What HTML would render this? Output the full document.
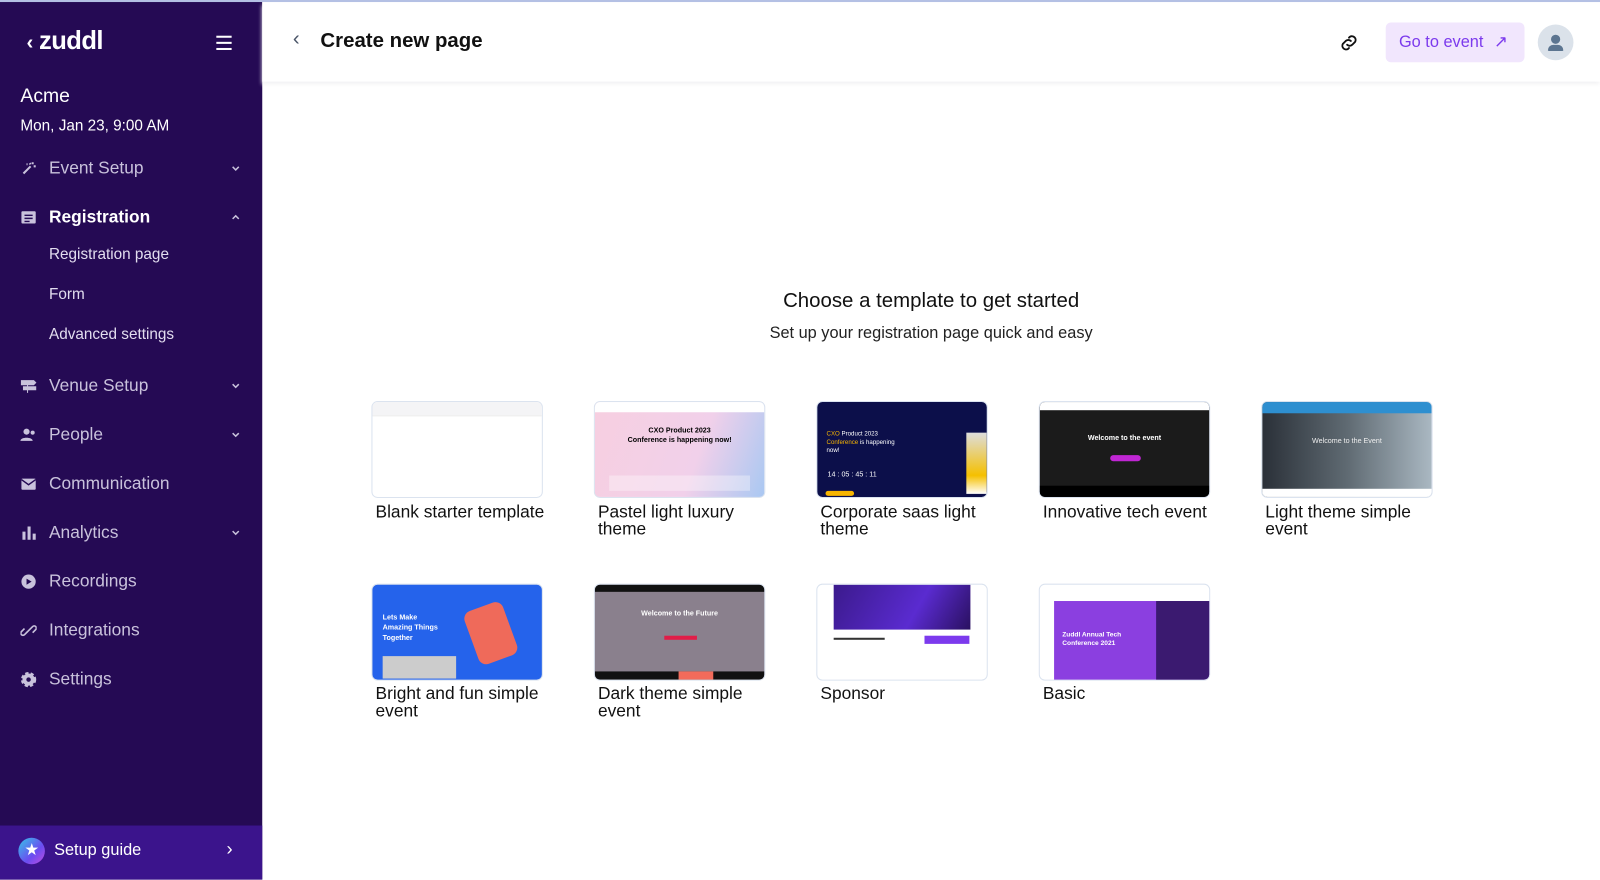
<!DOCTYPE html>
<html><head><meta charset="utf-8"><style>
*{box-sizing:border-box;margin:0;padding:0}
body{width:1600px;height:879px;overflow:hidden;font-family:"Liberation Sans",sans-serif;background:#fff;position:relative}
#w{position:absolute;left:0;top:0;width:1568px;height:862px;transform:scale(1.02041);transform-origin:0 0}
.topline{position:absolute;left:0;top:0;width:1568px;height:2px;background:#b4c0e4;z-index:5}
.side{position:absolute;left:0;top:0;width:257px;height:862px;background:#250a54;color:#fff}
.logo{position:absolute;left:26px;top:26px;font-size:25px;font-weight:bold;letter-spacing:-0.5px}
.ham{position:absolute;left:212px;top:35px;width:15px}
.ham i{display:block;height:2px;background:#fff;margin-bottom:4px}
.acme{position:absolute;left:20px;top:84px;font-size:19px}
.date{position:absolute;left:20px;top:115px;font-size:15px}
.item{position:absolute;left:20px;font-size:17px;color:#c9c2dc;display:flex;align-items:center;width:220px}
.item .ic{width:16px;height:16px;margin-right:12px;display:inline-block}
.item .chev{position:absolute;right:4px;top:5px;width:10px;height:10px}
.sub{position:absolute;left:48px;font-size:15px;color:#e2ddef}
.guide{position:absolute;left:0;top:809px;width:257px;height:53px;background:#3b148c}
.main-h{position:absolute;left:257px;top:2px;right:0;height:78px;background:#fff;box-shadow:0 3px 4px #f2f2f4}
.card{position:absolute;width:168px;height:95px;border:1.5px solid #dbe3ef;border-radius:6px;overflow:hidden}
.lbl{position:absolute;font-size:17px;color:#111;line-height:17px;width:168px}
</style></head><body><div id="w">
<div class="topline"></div>
<div class="side">
 <div class="logo"><span style="font-size:20px;margin-right:6px">&lsaquo;</span>zuddl</div>
 <div class="ham"><i></i><i></i><i></i></div>
 <div class="acme">Acme</div>
 <div class="date">Mon, Jan 23, 9:00 AM</div>
 <div class="item" style="top:155px"><svg class="ic" viewBox="0 0 16 16"><path d="M3 13L10 6M9 3l1 1M12 2v2M13 6h2M6 4l1 0" stroke="#c9c2dc" stroke-width="2" fill="none"/></svg>Event Setup<svg class="chev" viewBox="0 0 10 10"><path d="M2 3.5l3 3 3-3" stroke="#c9c2dc" stroke-width="1.5" fill="none"/></svg></div>
 <div class="item" style="top:203px;color:#fff;font-weight:bold"><svg class="ic" viewBox="0 0 16 16"><rect x="1" y="2" width="14" height="12" rx="1" fill="#c9c2dc"/><path d="M4 6h8M4 9h8M4 12h5" stroke="#250a54" stroke-width="1.4"/></svg>Registration<svg class="chev" viewBox="0 0 10 10"><path d="M2 6.5l3-3 3 3" stroke="#c9c2dc" stroke-width="1.5" fill="none"/></svg></div>
 <div class="sub" style="top:241px">Registration page</div>
 <div class="sub" style="top:280px">Form</div>
 <div class="sub" style="top:319px">Advanced settings</div>
 <div class="item" style="top:368px"><svg class="ic" viewBox="0 0 16 16"><path d="M1 3h12l2 2-2 2H1zM3 9h12v3H3zM7 7v8" fill="#c9c2dc" stroke="#c9c2dc"/></svg>Venue Setup<svg class="chev" viewBox="0 0 10 10"><path d="M2 3.5l3 3 3-3" stroke="#c9c2dc" stroke-width="1.5" fill="none"/></svg></div>
 <div class="item" style="top:416px"><svg class="ic" viewBox="0 0 16 16"><circle cx="6" cy="5" r="3" fill="#c9c2dc"/><path d="M0 14c0-4 12-4 12 0z" fill="#c9c2dc"/><circle cx="12" cy="6" r="2" fill="#c9c2dc"/></svg>People<svg class="chev" viewBox="0 0 10 10"><path d="M2 3.5l3 3 3-3" stroke="#c9c2dc" stroke-width="1.5" fill="none"/></svg></div>
 <div class="item" style="top:464px"><svg class="ic" viewBox="0 0 16 16"><rect x="1" y="3" width="14" height="11" rx="1" fill="#c9c2dc"/><path d="M1 4l7 5 7-5" stroke="#250a54" stroke-width="1.4" fill="none"/></svg>Communication</div>
 <div class="item" style="top:512px"><svg class="ic" viewBox="0 0 16 16"><path d="M2 7h3v8H2zM7 2h3v13H7zM12 9h3v6h-3z" fill="#c9c2dc"/></svg>Analytics<svg class="chev" viewBox="0 0 10 10"><path d="M2 3.5l3 3 3-3" stroke="#c9c2dc" stroke-width="1.5" fill="none"/></svg></div>
 <div class="item" style="top:560px"><svg class="ic" viewBox="0 0 16 16"><circle cx="8" cy="8" r="7" fill="#c9c2dc"/><path d="M6 5l5 3-5 3z" fill="#250a54"/></svg>Recordings</div>
 <div class="item" style="top:608px"><svg class="ic" viewBox="0 0 16 16"><path d="M7 9l-3 3a2 2 0 0 1-3-3l3-3M9 7l3-3a2 2 0 0 1 3 3l-3 3M6 10l4-4" stroke="#c9c2dc" stroke-width="1.6" fill="none"/></svg>Integrations</div>
 <div class="item" style="top:656px"><svg class="ic" viewBox="0 0 16 16"><circle cx="8" cy="8" r="6" fill="#c9c2dc" stroke="#c9c2dc" stroke-width="3" stroke-dasharray="3 2"/><circle cx="8" cy="8" r="2.2" fill="#250a54"/></svg>Settings</div>
 <div class="guide">
  <div style="position:absolute;left:18px;top:12px;width:26px;height:26px;border-radius:50%;background:linear-gradient(135deg,#36c6e8,#6b4cf0 60%,#c04fe0);color:#fff;text-align:center;font-size:16px;line-height:26px">&#9733;</div>
  <div style="position:absolute;left:53px;top:16px;font-size:16px;color:#fff">Setup guide</div>
  <div style="position:absolute;left:222px;top:13px;font-size:18px;color:#fff">&rsaquo;</div>
 </div>
</div>
<div class="main-h">
 <div style="position:absolute;left:30px;top:25px;font-size:20px;color:#4a5568">&lsaquo;</div>
 <div style="position:absolute;left:57px;top:27px;font-size:20px;color:#111;font-weight:bold">Create new page</div>
 <svg style="position:absolute;left:1054px;top:29px" width="22" height="22" viewBox="0 0 24 24"><path d="M10 14a4 4 0 0 0 5.5 0l3-3a4 4 0 0 0-5.5-5.5l-1 1M14 10a4 4 0 0 0-5.5 0l-3 3a4 4 0 0 0 5.5 5.5l1-1" stroke="#111" stroke-width="2" fill="none" stroke-linecap="round"/></svg>
 <div style="position:absolute;left:1101px;top:20px;width:136px;height:39px;background:#f1e6fd;border-radius:5px;color:#7c3aed;font-size:16px;line-height:39px;padding-left:13px">Go to event <span style="margin-left:6px">&#8599;</span></div>
 <div style="position:absolute;left:1250px;top:22px;width:35px;height:35px;border-radius:50%;background:#dbe2ea">
  <div style="position:absolute;left:13px;top:10px;width:9px;height:9px;border-radius:50%;background:#5c7590"></div>
  <div style="position:absolute;left:10px;top:20px;width:15px;height:6px;border-radius:6px 6px 1px 1px;background:#5c7590"></div>
 </div>
</div>
<div style="position:absolute;left:257px;top:284px;width:1311px;text-align:center;font-size:20px;color:#111">Choose a template to get started</div>
<div style="position:absolute;left:257px;top:318px;width:1311px;text-align:center;font-size:16px;color:#222">Set up your registration page quick and easy</div>

<div class="card" style="left:364px;top:393px;background:#fff"><div style="height:14px;background:#f4f4f6;border-bottom:1px solid #eee"></div></div>
<div class="lbl" style="left:368px;top:493px;width:180px">Blank starter template</div>
<div class="card" style="left:582px;top:393px;background:linear-gradient(110deg,#f7cfe0,#f1d0ea 60%,#a9c8f2)"><div style="height:10px;background:#fff"></div><div style="text-align:center;font-size:7px;font-weight:bold;margin-top:14px;line-height:9px">CXO Product 2023<br>Conference is happening now!</div><div style="position:absolute;left:14px;top:72px;width:138px;height:15px;background:rgba(255,255,255,.35)"></div></div>
<div class="lbl" style="left:586px;top:493px;width:150px">Pastel light luxury theme</div>
<div class="card" style="left:800px;top:393px;background:#0c0f4a"><div style="position:absolute;left:9px;top:28px;font-size:6px;color:#fff;line-height:8px"><span style="color:#f7b500">CXO</span> Product 2023<br><span style="color:#f7b500">Conference</span> is happening<br>now!</div><div style="position:absolute;left:10px;top:68px;font-size:7px;color:#fff">14 : 05 : 45 : 11</div><div style="position:absolute;left:8px;top:87px;width:28px;height:5px;background:#f7b500;border-radius:3px"></div><div style="position:absolute;right:0;top:30px;width:20px;height:60px;background:linear-gradient(#ddd,#f5c000 70%,#fff)"></div></div>
<div class="lbl" style="left:804px;top:493px">Corporate saas light theme</div>
<div class="card" style="left:1018px;top:393px;background:#1b1b1b"><div style="height:8px;background:#fff"></div><div style="text-align:center;color:#fff;font-size:7px;font-weight:bold;margin-top:24px">Welcome to the event</div><div style="position:absolute;left:69px;top:52px;width:30px;height:6px;border-radius:3px;background:#c026d3"></div><div style="position:absolute;left:0;bottom:0;width:100%;height:11px;background:#000"></div></div>
<div class="lbl" style="left:1022px;top:493px;width:180px">Innovative tech event</div>
<div class="card" style="left:1236px;top:393px;background:linear-gradient(90deg,#2a3038,#5f6a72 50%,#aab8c2)"><div style="height:11px;background:#2e8fd0"></div><div style="text-align:center;color:#eee;font-size:7px;margin-top:24px">Welcome to the Event</div><div style="position:absolute;left:0;bottom:0;width:100%;height:8px;background:#fff"></div></div>
<div class="lbl" style="left:1240px;top:493px">Light theme simple event</div>

<div class="card" style="left:364px;top:572px;background:#2563eb"><div style="position:absolute;left:10px;top:28px;color:#fff;font-size:7px;font-weight:bold;line-height:10px">Lets Make<br>Amazing Things<br>Together</div><div style="position:absolute;left:96px;top:20px;width:40px;height:55px;background:#ef6a5a;border-radius:8px;transform:rotate(-20deg)"></div><div style="position:absolute;left:10px;top:70px;width:72px;height:22px;background:#ccc"></div></div>
<div class="lbl" style="left:368px;top:671px">Bright and fun simple event</div>
<div class="card" style="left:582px;top:572px;background:#8a808d"><div style="height:7px;background:#111"></div><div style="text-align:center;color:#fff;font-size:7px;font-weight:bold;margin-top:18px">Welcome to the Future</div><div style="position:absolute;left:68px;top:50px;width:32px;height:4px;background:#e11d48"></div><div style="position:absolute;left:0;bottom:0;width:100%;height:8px;background:#111"></div><div style="position:absolute;left:82px;bottom:0;width:34px;height:8px;background:#f26b5b"></div></div>
<div class="lbl" style="left:586px;top:671px">Dark theme simple event</div>
<div class="card" style="left:800px;top:572px;background:#fff"><div style="position:absolute;left:16px;top:0;width:134px;height:44px;background:linear-gradient(120deg,#3b1a8c,#5a2bd0 60%,#2a1060)"></div><div style="position:absolute;left:105px;top:50px;width:44px;height:8px;background:#7c3aed"></div><div style="position:absolute;left:16px;top:52px;width:50px;height:2px;background:#333"></div></div>
<div class="lbl" style="left:804px;top:671px">Sponsor</div>
<div class="card" style="left:1018px;top:572px;background:#fff"><div style="position:absolute;left:14px;top:16px;width:154px;height:79px;background:#8b3fe0"></div><div style="position:absolute;left:114px;top:16px;width:54px;height:79px;background:#3b1a70"></div><div style="position:absolute;left:22px;top:46px;color:#fff;font-size:6.5px;font-weight:bold;line-height:8px">Zuddl Annual Tech<br>Conference 2021</div></div>
<div class="lbl" style="left:1022px;top:671px">Basic</div>
</div></body></html>
